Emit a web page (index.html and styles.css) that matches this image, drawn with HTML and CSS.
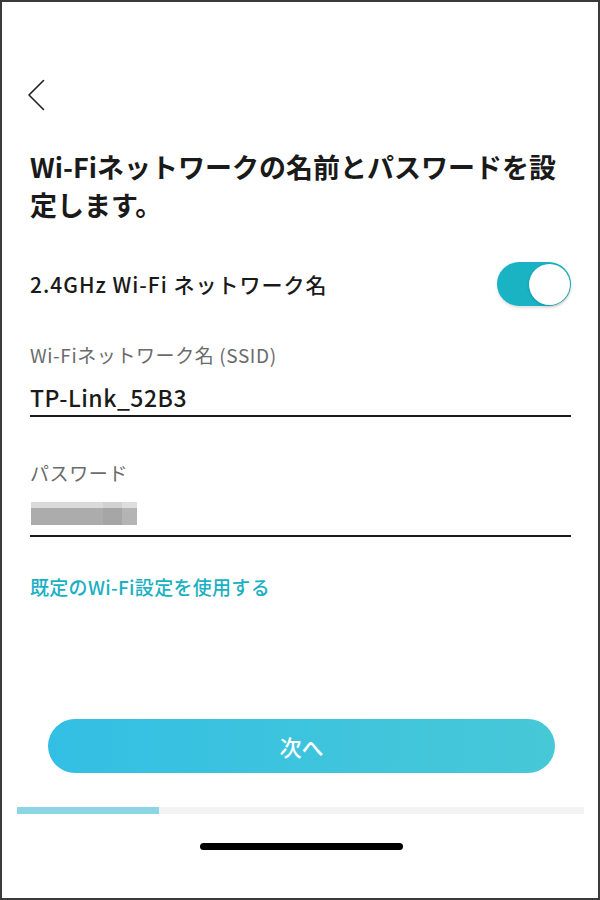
FILE: index.html
```html
<!DOCTYPE html>
<html lang="ja">
<head>
    <meta charset="UTF-8">
    <meta name="viewport" content="width=device-width, initial-scale=1.0">
    <title>Wi-Fi設定</title>
    <link rel="stylesheet" href="styles.css">
</head>
<body>
    <div class="screen">
        <div class="content">
            <!-- 戻る -->
            <div class="nav">
                <svg class="back-icon" width="18" height="32" viewBox="0 0 18 32">
                    <path d="M16.5 1.5 L2 16 L16.5 30.5" fill="none" stroke="#222" stroke-width="1.6" stroke-linecap="round" stroke-linejoin="round"/>
                </svg>
            </div>

            <h1>Wi-Fiネットワークの名前とパスワードを設定します。</h1>

            <div class="toggle-row">
                <span class="toggle-label">2.4GHz Wi-Fi ネットワーク名</span>
                <div class="toggle on">
                    <div class="knob"></div>
                </div>
            </div>

            <div class="field">
                <div class="field-label">Wi-Fiネットワーク名 (SSID)</div>
                <div class="field-value">TP-Link_52B3</div>
            </div>

            <div class="field field-password">
                <div class="field-label">パスワード</div>
                <div class="field-value">
                    <div class="blurred"></div>
                </div>
            </div>

            <a class="default-link" href="#">既定のWi-Fi設定を使用する</a>
        </div>

        <div class="footer">
            <button class="next-btn">次へ</button>
            <div class="progress">
                <div class="progress-fill" style="width: 25%"></div>
            </div>
            <div class="home-indicator"></div>
        </div>
    </div>
</body>
</html>
```

FILE: styles.css
```css
body {
    margin: 0;
    padding: 0;
    background-color: #fff;
    font-family: "Noto Sans CJK JP", "Noto Sans", sans-serif;
    color: #1a1a1a;
}

.screen {
    width: 600px;
    height: 900px;
    box-sizing: border-box;
    border: 2px solid #3a3a3a;
    display: flex;
    flex-direction: column;
    background-color: #fff;
}

.content {
    padding: 0 27px 0 28px;
}

.nav {
    padding-top: 77px;
    height: 32px;
}

.back-icon {
    display: block;
    margin-left: -3px;
}

h1 {
    margin: 37px 0 0;
    font-size: 27px;
    line-height: 38px;
    font-weight: bold;
    color: #1a1a1a;
}

.toggle-row {
    margin-top: 38px;
    height: 44px;
    display: flex;
    align-items: center;
    justify-content: space-between;
}

.toggle-label {
    font-size: 21px;
    letter-spacing: 1px;
    font-weight: 500;
    color: #1a1a1a;
}

.toggle {
    width: 74px;
    height: 44px;
    border-radius: 22px;
    background-color: #19b3c4;
    box-shadow: 0 2px 3px rgba(0, 0, 0, 0.12);
    display: flex;
    align-items: center;
    justify-content: flex-end;
    padding: 0 1px;
    box-sizing: border-box;
}

.knob {
    width: 41px;
    height: 41px;
    border-radius: 50%;
    background-color: #fff;
    box-shadow: 0 1px 3px rgba(0, 0, 0, 0.2);
}

.field {
    margin-top: 36px;
}

.field-password {
    margin-top: 43px;
}

.field-label {
    font-size: 19px;
    line-height: 26px;
    letter-spacing: 0.6px;
    color: #6b6b6b;
}

.field-value {
    margin-top: 14px;
    font-size: 23px;
    line-height: 30px;
    letter-spacing: 0.5px;
    font-weight: 500;
    padding-bottom: 3px;
    border-bottom: 2px solid #1a1a1a;
}

.field-password .field-value {
    margin-top: 16px;
    padding-bottom: 10px;
}

.blurred {
    width: 106px;
    height: 23px;
    margin-left: 1px;
    background:
        linear-gradient(90deg, rgba(255,255,255,0) 0 68%, rgba(0,0,0,0.04) 68% 86%, rgba(255,255,255,0.1) 86%),
        linear-gradient(#dadada 0 28%, #acacac 28%);
}

.default-link {
    display: block;
    margin-top: 37px;
    font-size: 19px;
    line-height: 26px;
    letter-spacing: 0.3px;
    font-weight: 500;
    color: #1cb0c4;
    text-decoration: none;
}

.footer {
    margin-top: auto;
    padding-bottom: 48px;
    display: flex;
    flex-direction: column;
    align-items: center;
}

.next-btn {
    width: 507px;
    height: 54px;
    border: none;
    border-radius: 27px;
    background: linear-gradient(90deg, #33bfe4, #47c8d7);
    color: #fff;
    font-family: "Noto Sans CJK JP", "Noto Sans", sans-serif;
    font-size: 22px;
    font-weight: 500;
    margin-left: 3px;
}

.progress {
    width: 567px;
    height: 7px;
    margin-top: 34px;
    background-color: #f3f3f3;
    margin-left: 1px;
}

.progress-fill {
    height: 100%;
    background-color: #8bd5e5;
}

.home-indicator {
    width: 203px;
    height: 7px;
    margin-top: 29px;
    border-radius: 4px;
    background-color: #000;
    margin-left: 3px;
}
```
